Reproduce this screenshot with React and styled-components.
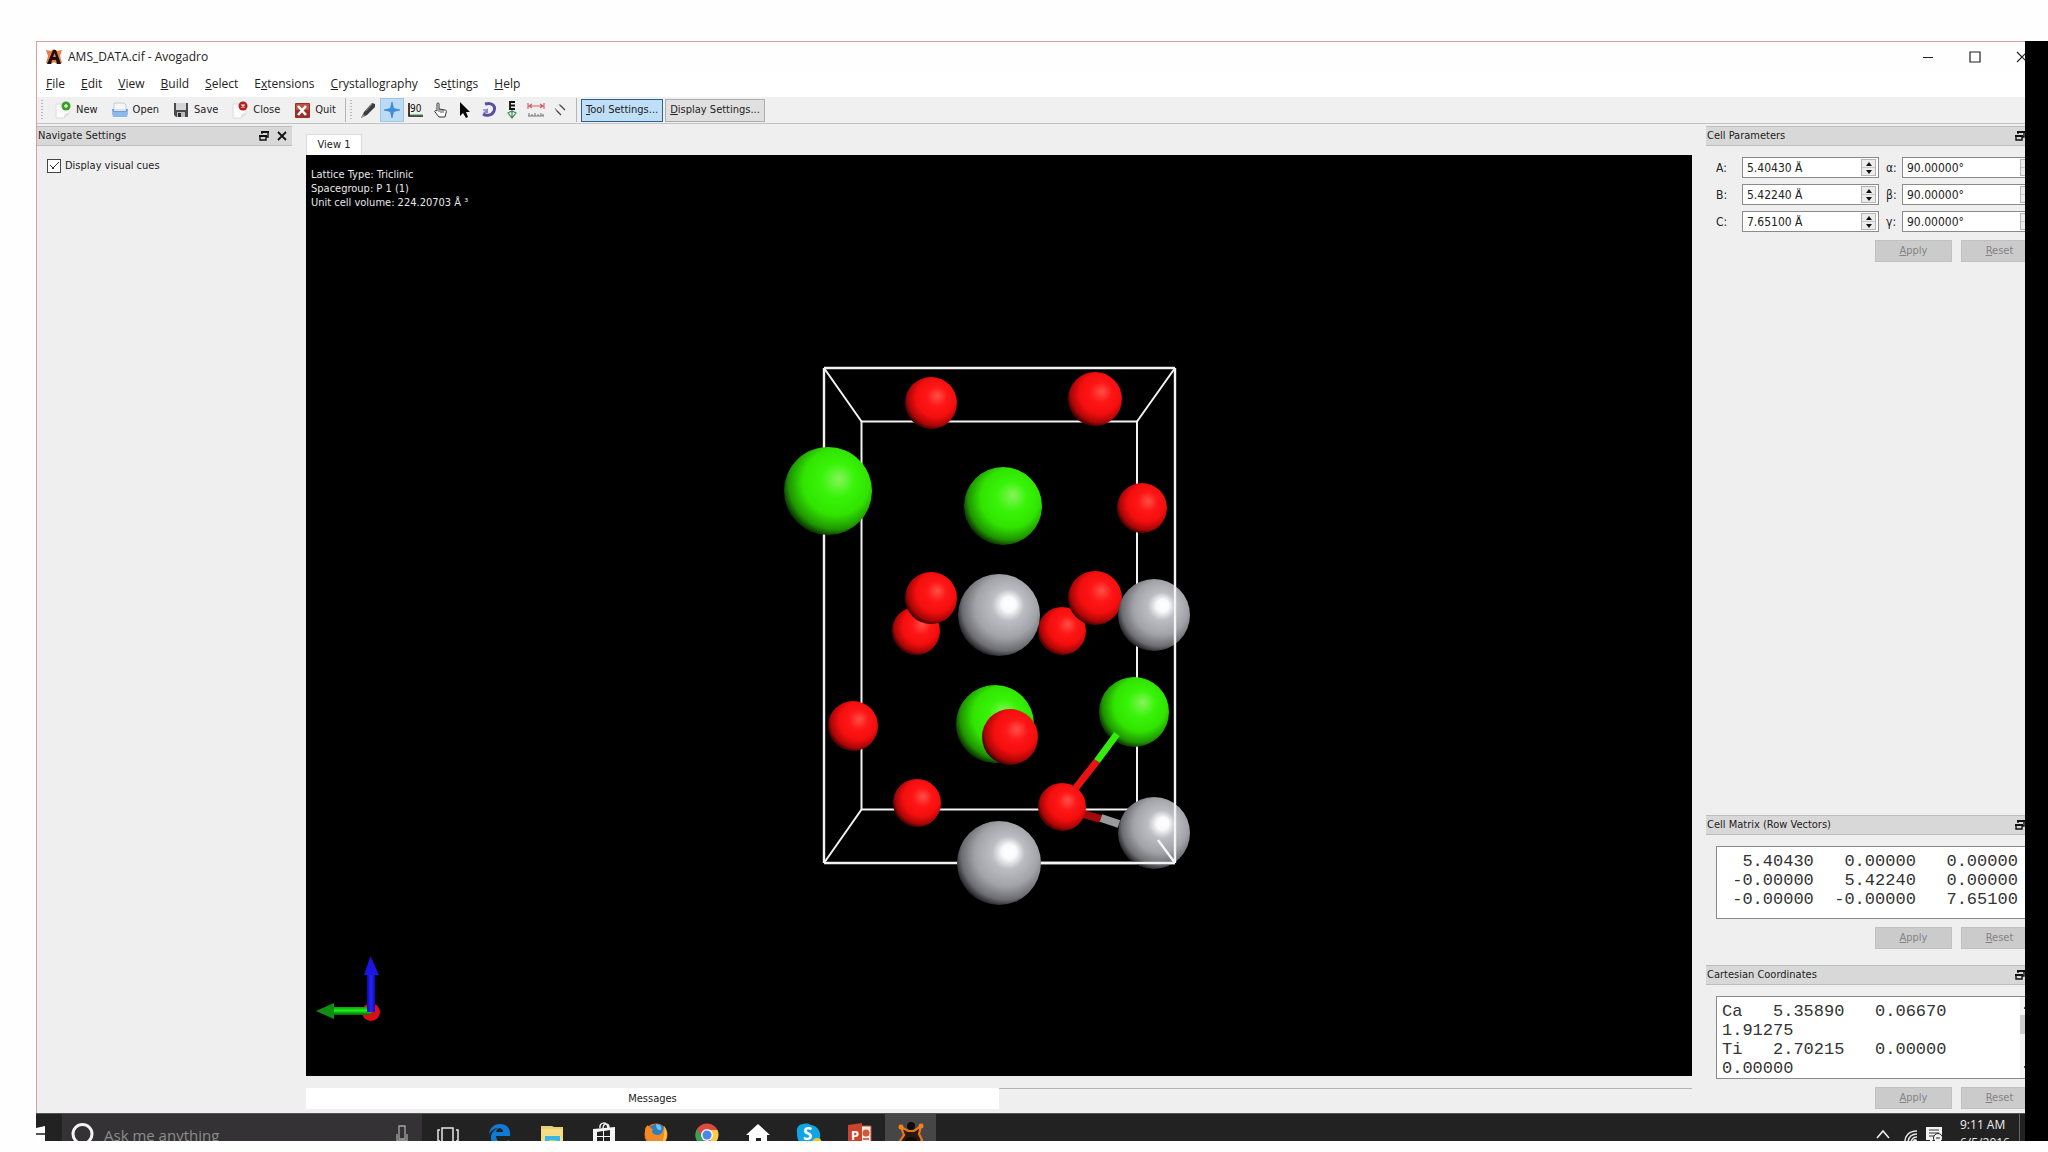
import React from "react";
import styled, { createGlobalStyle, css } from "styled-components";

const UI = `"DejaVu Sans Condensed", "DejaVu Sans", sans-serif`;
const SEGOE = `"Open Sans", "Noto Sans", sans-serif`;
const MONO = `"Liberation Mono", "Courier New", monospace`;

const Global = createGlobalStyle`
  *, *::before, *::after { box-sizing: border-box; }
  body { margin: 0; background: #fff; }
  button, input, textarea { font: inherit; color: inherit; margin: 0; }
`;

/* ---------- page ---------- */
const Stage = styled.div`
  display: flex;
  height: 100vh;
  padding: 41px 0 11px 36px;
  overflow: hidden;
  background: #fefefe;
`;
const Screen = styled.main`
  flex: 1;
  min-width: 0;
  display: flex;
  flex-direction: column;
  overflow: hidden;
`;
const BlackEdge = styled.div`
  flex: 0 0 23px;
  background: #000;
`;
const Window = styled.section`
  flex: 1;
  min-height: 0;
  display: flex;
  flex-direction: column;
  margin-right: -23px;
  background: #f0eff0;
  border: solid #d9a09b;
  border-width: 1px 0 0 1px;
  color: #222;
  font: 11px/14px ${UI};
`;

/* ---------- title and menu ---------- */
const TitleBar = styled.header`
  display: flex;
  align-items: center;
  height: 30px;
  padding-left: 8px;
  background: #fffefe;
  font: 12px/16px ${SEGOE};
`;
const Title = styled.h1`
  flex: 1;
  margin: 0 0 0 5px;
  font: inherit;
`;
const Caption = styled.button`
  width: 47px;
  height: 30px;
  padding: 0;
  border: 0;
  background: none;
  display: grid;
  place-items: center;
`;
const Captions = styled.div`
  display: flex;
  padding-right: 3px;
`;
const MenuBar = styled.nav`
  display: flex;
  align-items: center;
  gap: 16px;
  height: 25px;
  padding: 0 0 2px 9px;
  background: #fff;
  font: 12px/16px ${SEGOE};
`;
const MenuItem = styled.button`
  padding: 0;
  border: 0;
  background: none;
`;

/* ---------- toolbar ---------- */
const ToolBar = styled.div`
  display: flex;
  align-items: center;
  height: 27px;
  padding-left: 4px;
  background: #f1f0f1;
  border-bottom: 1px solid #c4c3c4;
`;
const Handle = styled.i`
  width: 2px;
  height: 20px;
  background: repeating-linear-gradient(#b9b9b9 0 1px, transparent 1px 3px);
`;
const FileActions = styled.div`
  display: flex;
  gap: 13px;
  padding: 0 9px 0 11px;
`;
const FileButton = styled.button`
  display: flex;
  align-items: center;
  gap: 4px;
  padding: 0;
  border: 0;
  background: none;
`;
const Rule = styled.i`
  width: 1px;
  height: 24px;
  margin-right: 4px;
  background: #b5b5b5;
`;
const Tools = styled.div`
  display: flex;
  padding: 0 4px;
`;
const ToolButton = styled.button`
  width: 24px;
  height: 24px;
  padding: 0;
  display: grid;
  place-items: center;
  border: 1px solid transparent;
  background: none;
  ${(p) => p.$on && css`background: #bcdcf4; border-color: #9fc8e8;`}
`;
const TextToggle = styled.button`
  height: 23px;
  padding: 0 4px;
  margin-right: 2px;
  border: 1px solid ${(p) => (p.$on ? "#2c628b" : "#adadad")};
  background: ${(p) => (p.$on ? "#bfdff6" : "#e1e0e1")};
`;

/* ---------- docks ---------- */
const Body = styled.div`
  flex: 1;
  min-height: 0;
  display: flex;
`;
const Dock = styled.aside`
  flex: 0 0 ${(p) => p.$width}px;
  min-width: 0;
  display: flex;
  flex-direction: column;
  padding-top: 2px;
`;
const DockTitle = styled.h2`
  display: flex;
  align-items: center;
  gap: 7px;
  height: 20px;
  margin: 0;
  padding: 0 5px 0 1px;
  font: inherit;
  background: #d9d8d9;
  border: solid #bfbebf;
  border-width: 1px 0;
  span { flex: 1; }
  svg { display: block; }
`;
const DockIcon = styled.button`
  padding: 0;
  border: 0;
  background: none;
`;
const CheckRow = styled.label`
  display: flex;
  align-items: center;
  gap: 4px;
  padding: 13px 10px;
`;
const Check = styled.input`
  appearance: none;
  width: 14px;
  height: 14px;
  margin: 0;
  border: 1px solid #444;
  background: #fff;
  &:checked {
    background-image: linear-gradient(45deg, transparent 46%, #333 46% 56%, transparent 56%),
      linear-gradient(-45deg, transparent 46%, #333 46% 56%, transparent 56%);
    background-size: 4px 4px, 7px 7px;
    background-position: 2px 5px, 4px 2px;
    background-repeat: no-repeat;
  }
`;
const Panel = styled.section`
  flex: ${(p) => (p.$grow ? "1" : "0 0 auto")};
`;
const PanelBody = styled.div`
  padding: 11px 10px ${(p) => p.$bottom}px;
`;
const ParamGrid = styled.div`
  display: grid;
  grid-template-columns: 26px 137px 23px minmax(0, 1fr);
  row-gap: 6px;
  align-items: center;
  font-size: 12px;
`;
const ParamLabel = styled.label`
  padding-left: ${(p) => (p.$second ? 7 : 0)}px;
`;
const Spin = styled.div`
  display: flex;
  height: 21px;
  border: 1px solid #8b8a8b;
  background: #fff;
  input {
    flex: 1;
    width: 0;
    min-width: 0;
    padding: 0 0 0 4px;
    border: 0;
    background: none;
    outline: 0;
  }
`;
const SpinArrows = styled.div`
  flex: 0 0 15px;
  display: flex;
  flex-direction: column;
  margin: 1px 2px 1px 0;
  background: #ececec;
  border: 1px solid #b5b5b5;
  button {
    flex: 1;
    display: grid;
    place-items: center;
    padding: 0;
    border: 0;
    background: none;
    min-height: 0;
  }
  button + button { border-top: 1px solid #c8c8c8; }
`;
const Actions = styled.div`
  display: flex;
  justify-content: flex-end;
  gap: 9px;
  margin-top: 8px;
`;
const ActionButton = styled.button`
  width: 77px;
  height: 22px;
  padding: 0;
  border: 1px solid #c2c1c2;
  background: #cccbcc;
  color: #848384;
`;
const Frame = styled.div`
  display: flex;
  height: ${(p) => p.$height}px;
  border: 1px solid #8b8a8b;
  background: #fff;
`;
const Code = styled.textarea`
  flex: 1;
  min-width: 0;
  padding: 5px 0 0 5px;
  border: 0;
  outline: 0;
  resize: none;
  overflow: hidden;
  white-space: pre;
  background: none;
  color: #333;
  font: 17px/19px ${MONO};
`;
const ScrollTrack = styled.div`
  flex: 0 0 17px;
  display: flex;
  flex-direction: column;
  justify-content: space-between;
  padding: 7px 4px;
  background: linear-gradient(#cdcdcd, #cdcdcd) 0 18px / 17px 19px no-repeat #f3f3f3;
`;

/* ---------- centre ---------- */
const Center = styled.div`
  flex: 1;
  min-width: 0;
  display: flex;
  flex-direction: column;
  margin: 0 14px;
  padding-top: 10px;
`;
const Tab = styled.button`
  align-self: flex-start;
  height: 21px;
  width: 56px;
  padding: 0;
  border: 1px solid #dcdbdc;
  border-bottom: 0;
  background: #fff;
`;
const View = styled.div`
  position: relative;
  flex: 1;
  min-height: 0;
  background: #000;
`;
const Scene = styled.svg`
  display: block;
  width: 100%;
  height: 100%;
`;
const Overlay = styled.p`
  position: absolute;
  left: 5px;
  top: 13px;
  margin: 0;
  color: #e8e8e8;
  white-space: pre;
`;
const MessageRow = styled.div`
  display: flex;
  padding: 12px 0 4px;
`;
const MessageTab = styled.button`
  flex: 1;
  height: 21px;
  padding: 0;
  border: 0;
  background: #fff;
`;
const MessageRest = styled.div`
  flex: 1;
  border-top: 1px solid #b5b4b5;
`;

/* ---------- taskbar ---------- */
const TaskBar = styled.footer`
  flex: 0 0 28px;
  display: flex;
  overflow: hidden;
  border-top: 1px solid #555;
  background: #232223;
  color: #eee;
  font: 12px/18px ${SEGOE};
`;
const StartButton = styled.button`
  width: 26px;
  height: 42px;
  padding: 0;
  border: 0;
  background: none;
  svg { display: block; }
`;
const Search = styled.label`
  display: flex;
  align-items: flex-start;
  width: 360px;
  height: 42px;
  padding-left: 9px;
  background: #343234;
  input {
    flex: 1;
    min-width: 0;
    height: 42px;
    padding: 0 0 0 10px;
    border: 0;
    outline: 0;
    background: none;
    font: 15px/20px ${SEGOE};
  }
  input::placeholder { color: #8d8b8d; opacity: 1; }
`;
const Apps = styled.div`
  flex: 1;
  display: flex;
`;
const AppButton = styled.button`
  display: flex;
  align-items: flex-start;
  justify-content: center;
  width: ${(p) => (p.$first ? 52 : 51)}px;
  height: 42px;
  padding: 0;
  border: 0;
  background: ${(p) => (p.$on ? "#474647" : "none")};
`;
const Tray = styled.div`
  display: flex;
  button { padding: 0; border: 0; background: none; height: 42px; }
  svg { display: block; }
`;
const Clock = styled.time`
  width: 60px;
  height: 42px;
  margin-left: 17px;
  padding-top: 2px;
  border-right: 1px solid #666;
  white-space: pre;
`;

/* Marks the letter after "&" as the access key. */
function Key({ text }) {
  const at = text.indexOf("&");
  return (
    <>
      {text.slice(0, at)}
      <u>{text[at + 1]}</u>
      {text.slice(at + 2)}
    </>
  );
}

const Svg = ({ w = 18, h = w, vb, children }) => (
  <svg width={w} height={h} viewBox={vb || `0 0 ${w} ${h}`} fill="none" aria-hidden="true">
    {children}
  </svg>
);

const Page = ({ badge, mark }) => (
  <Svg>
    <path d="M2 3h9l4 4v6l-5 4H2z" fill="#fbfbfb" stroke="#dcdcdc" />
    <path d="M15 12l-5 5c0-3 1-5 5-5z" fill="#ddd" />
    <circle cx="12" cy="5" r="4.500" fill={badge} />
    {mark}
  </Svg>
);

const fileActions = [
  ["New", <Page badge="#3f9c2b" mark={<path d="M12 3v4M10 5h4" stroke="#d8f5c8" strokeWidth="1.500" />} />],
  ["Open", <Svg>
    <path d="M3 9V2h10l2 2v5z" fill="#f4f7fb" stroke="#c5cbd4" />
    <path d="M1 8h2v2h12V8h2l-1 8H2z" fill="#6da0dc" />
    <path d="M1 11h16l-1 5H2z" fill="#8db8ea" />
  </Svg>],
  ["Save", <Svg>
    <path d="M2 2h14v14H4l-2-2z" fill="#4a4a4c" />
    <path d="M4 2h10v7H4z" fill="#d4d4d6" />
    <path d="M5 11h8v5H5z" fill="#b9b9bb" />
    <path d="M6 12h3v4H6z" fill="#2c2c2e" />
  </Svg>],
  ["Close", <Page badge="#b3201f" mark={<path d="M10.500 3.500l3 3M13.500 3.500l-3 3" stroke="#fff" strokeWidth="1.300" />} />],
  ["Quit", <Svg>
    <rect x="2" y="2" width="15" height="15" rx="1" fill="#9c2f25" />
    <rect x="3" y="3" width="13" height="6" fill="#bb5346" />
    <path d="M5 5l8 9M13 5l-8 9" stroke="#fff" strokeWidth="2.600" />
  </Svg>],
];

const tools = [
  ["Draw", <Svg>
    <path d="M2 17l3-6 8-9 3 1 0 3-8 8z" fill="#3c3c3c" />
    <path d="M2 17l2-4 2 2z" fill="#999" />
    <path d="M7 10l6-7" stroke="#888" />
  </Svg>],
  ["Navigate", <Svg><path d="M9 1l1.600 6.400L17 9l-6.400 1.600L9 17l-1.600-6.400L1 9l6.400-1.600z" fill="#3f8fdc" stroke="#2f78c0" strokeWidth=".6" /></Svg>],
  ["Bond centric", <Svg>
    <path d="M2 2v13h14" stroke="#111" strokeWidth="1.600" />
    <path d="M3 14h13" stroke="#2d9a3e" />
    <text x="3" y="11" fontSize="10" fontFamily="DejaVu Sans Condensed" fill="#111">90</text>
  </Svg>],
  ["Manipulate", <Svg>
    <path d="M6 10V3c0-1.500 2-1.500 2 0v5l6 1c1 0 2 1 1 3l-1 4H8l-4-5c-1-1 1-2 2-1z" fill="#fff" stroke="#333" />
    <path d="M10 9v3M12 9v3M8 8v3" stroke="#555" />
  </Svg>],
  ["Selection", <Svg><path d="M5 1v14l3-3 3 5 2-1-2-5h4z" fill="#050505" /></Svg>],
  ["Auto rotate", <Svg>
    <path d="M6 3c7-2 11 2 9 7-2 5-8 5-11 3" stroke="#564fa5" strokeWidth="3" />
    <path d="M9 7v5H4z" fill="#8d87c9" />
    <path d="M9 9H4" stroke="#8d87c9" strokeWidth="1.500" />
  </Svg>],
  ["Auto optimize", <Svg>
    <path d="M12 1H7v7h5M7 4.500h5" stroke="#111" strokeWidth="1.800" />
    <path d="M9 9v8M5 12l4-2 4 2-4 5z" stroke="#3f8f5c" strokeWidth="1.200" />
  </Svg>],
  ["Measure", <Svg>
    <path d="M1 2v6M17 2v6M2 5h14M5 3L2 5l3 2M13 3l3 2-3 2" stroke="#cf5a66" strokeWidth="1.100" />
    <path d="M1 15h16M2 15v-3M5 15v-2M8 15v-3M11 15v-2M14 15v-3M16 15v-2" stroke="#777" />
  </Svg>],
  ["Align", <Svg>
    <path d="M5 9l5 5M9 4l5 5" stroke="#444" strokeWidth="1.300" />
    <path d="M4 7l2 3M8 3l2 3" stroke="#888" />
  </Svg>],
];

const Float = () => (
  <DockIcon aria-label="Float">
    <Svg w={12}>
      <path d="M4 4V2h6v5H8" stroke="#111" strokeWidth="1.400" />
      <path d="M3 2h8" stroke="#111" strokeWidth="2" />
      <path d="M2 6h6v4H2z" stroke="#111" strokeWidth="1.400" />
      <path d="M1 6h8" stroke="#111" strokeWidth="2" />
    </Svg>
  </DockIcon>
);
const DockHead = ({ children }) => (
  <DockTitle>
    <span>{children}</span>
    <Float />
    <DockIcon aria-label="Close">
      <Svg w={10}><path d="M1 1l8 8M9 1L1 9" stroke="#111" strokeWidth="1.800" /></Svg>
    </DockIcon>
  </DockTitle>
);

const SpinBox = ({ id, value }) => (
  <Spin>
    <input id={id} defaultValue={value} />
    <SpinArrows>
      <button aria-label="Increase"><Svg w={6} h={4}><path d="M0 4l3-4 3 4z" fill="#111" /></Svg></button>
      <button aria-label="Decrease"><Svg w={6} h={4}><path d="M0 0h6L3 4z" fill="#111" /></Svg></button>
    </SpinArrows>
  </Spin>
);
const ApplyReset = () => (
  <Actions>
    <ActionButton disabled><Key text="&Apply" /></ActionButton>
    <ActionButton disabled><Key text="&Reset" /></ActionButton>
  </Actions>
);

const cell = [
  ["A:", "5.40430 Å", "α:", "90.00000°"],
  ["B:", "5.42240 Å", "β:", "90.00000°"],
  ["C:", "7.65100 Å", "γ:", "90.00000°"],
];
const matrix = `  5.40430   0.00000   0.00000
 -0.00000   5.42240   0.00000
 -0.00000  -0.00000   7.65100`;
const coordinates = `Ca   5.35890   0.06670
1.91275
Ti   2.70215   0.00000
0.00000`;

/* Atoms from back to front: element, x, y, radius. */
const atoms = [
  ["O", 931, 403, 26], ["O", 1095, 399, 27], ["Ca", 1003, 506, 39], ["O", 1142, 508, 25],
  ["O", 916, 631, 24], ["O", 931, 598, 26], ["O", 1062, 631, 24], ["O", 1095, 598, 27],
  ["Ti", 999, 615, 41], ["Ti", 1154, 615, 36], ["O", 853, 726, 25], ["Ca", 995, 724, 39],
  ["O", 1010, 737, 28], ["Ca", 1134, 712, 35], ["O", 917, 803, 24],
  ["Ti", 1154, 833, 36], ["Ca", 828, 491, 44],
];
const shades = {
  O: ["#ff5048", "#ff1616", "#f40e0e", "#a80606", "#2a0000"],
  Ca: ["#86f35a", "#38f408", "#30e400", "#1f9400", "#062400"],
  Ti: ["#ffffff", "#bcbdc2", "#a2a3a8", "#6c6c71", "#1c1c1f"],
};
const Atom = ({ a: [el, x, y, r] }) => <circle cx={x} cy={y} r={r} fill={`url(#${el})`} />;

function Molecule() {
  return (
    <Scene viewBox="306 155 1386 921" role="img" aria-label="Unit cell">
      <defs>
        {Object.entries(shades).map(([el, c]) => (
          <radialGradient key={el} id={el} cx=".57" cy=".42" r=".61" fx=".63" fy=".36">
            <stop offset="0" stopColor={c[0]} />
            {el === "Ti" && <stop offset=".14" stopColor="#fafafc" />}
            <stop offset=".32" stopColor={c[1]} />
            <stop offset=".62" stopColor={c[2]} />
            <stop offset=".86" stopColor={c[3]} />
            <stop offset="1" stopColor={c[4]} />
          </radialGradient>
        ))}
        <linearGradient id="zAxis"><stop stopColor="#0a0ab0" /><stop offset=".5" stopColor="#2b22ff" /><stop offset="1" stopColor="#0c0cb4" /></linearGradient>
        <linearGradient id="yAxis" x2="0" y2="1"><stop stopColor="#0d9a0d" /><stop offset=".45" stopColor="#1cf01c" /><stop offset="1" stopColor="#066006" /></linearGradient>
      </defs>
      <g stroke="#f2f2f2" strokeWidth="2" fill="none">
        <path d="M861.500 421.500H1137V809.500H861.500z" />
        <path d="M824 368l37.500 53.500M1175 368l-38 53.500M824 863l37.500-53.500M1175 863l-38-53.500" />
        <path d="M824 368H1175M824 863H1175M824 368V863" strokeWidth="2.400" />
      </g>
      {atoms.map((a, i) => <Atom key={i} a={a} />)}
      <path d="M1076 812l25 7" stroke="#a00a0a" strokeWidth="8" />
      <path d="M1101 818l18 6" stroke="#9a9a9c" strokeWidth="8" />
      <Atom a={["O", 1062, 807, 24]} />
      <path d="M1075 789l22-28" stroke="#e81414" strokeWidth="7" />
      <path d="M1097 761l20-27" stroke="#36ec0c" strokeWidth="7" />
      <Atom a={["Ti", 999, 863, 42]} />
      <g stroke="#f4f4f4" strokeWidth="2.400">
        <path d="M1175 368V863M1158 840l17 23M1041 863h134" />
      </g>
      <circle cx="371" cy="1012" r="9" fill="#d80f14" />
      <path d="M333 1007h36l4 4-4 4h-36z" fill="url(#yAxis)" />
      <path d="M316 1011l18-8v16z" fill="#0f8f12" />
      <path d="M367 972h8v40h-8z" fill="url(#zAxis)" />
      <path d="M370.500 956l8.500 19h-15z" fill="#1a16e0" />
    </Scene>
  );
}

const apps = [
  ["Task View", <Svg w={24} h={30}><path d="M6 14h11v15H6zM4 16H2v11h2M20 16h2v11h-2" stroke="#e6e6e6" strokeWidth="1.500" /></Svg>],
  ["Edge", <Svg w={24} h={32}><path d="M1 20C2 13 7 10 12 10c7 0 11 5 10 12H8c0 7 8 7 13 4v4c-8 4-19 3-18-8 1-4 4-7 8-8-5 0-8 3-10 6zm7-2h7c0-5-6-5-7 0z" fill="#0f7bd6" /></Svg>],
  ["File Explorer", <Svg w={24} h={32}>
    <path d="M1 12h11l2 1h9v19H1z" fill="#e8cf74" /><path d="M1 15h22v17H1z" fill="#f5dd86" />
    <path d="M5 22h15v10H5z" fill="#3cb6e6" /><path d="M9 26h7v6H9z" fill="#a5e04e" />
  </Svg>],
  ["Store", <Svg w={24} h={32}>
    <path d="M8 14c-1-6 7-7 8 0M11 14c1-6 6-5 6 0" stroke="#eee" strokeWidth="1.500" />
    <path d="M1 15l22-2v19H1z" fill="#f6f6f6" />
    <path d="M5 18l6-1v5H5zM12 17l6-1v6h-6zM5 23h6v6l-6-1zM12 23h6v7l-6-1z" fill="#222" />
  </Svg>],
  ["Firefox", <Svg w={24} h={32}>
    <circle cx="12" cy="21" r="11.500" fill="#e8701c" /><circle cx="13" cy="18" r="8" fill="#2b7fc4" />
    <path d="M12 10c4 0 6 3 5 6-3 1-5-2-5-6z" fill="#6cc3ee" />
    <path d="M1 17c0-4 2-5 3-6 1 3 3 3 5 4-2 3 0 6 4 6 4 0 6-2 7-9 5 6 4 16-4 19-8 3-15-4-15-14z" fill="#f08a24" />
    <path d="M20 12c4 5 4 13-2 18 2-6 3-12 2-18z" fill="#fbc63c" />
  </Svg>],
  ["Chrome", <Svg w={24} h={32}>
    <circle cx="12" cy="21" r="11.500" fill="#dd4b3e" />
    <path d="M2 15l6 9 4 8.500C2 32-2 23 2 15z" fill="#35a256" />
    <path d="M12 16h10.500c3 8-2 16-10.500 16.500l5-9z" fill="#f8cf44" />
    <circle cx="12" cy="21" r="6" fill="#f4f4f4" /><circle cx="12" cy="21" r="4.500" fill="#4b86e8" />
  </Svg>],
  ["Home", <Svg w={26} h={32}><path d="M13 10l12 11h-3v9h-6v-6h-5v6H4v-9H1z" fill="#fff" /></Svg>],
  ["Skype", <Svg w={26} h={32}>
    <path d="M7 10c4-1 6 0 8 1 7 1 10 7 9 12 1 4 0 8-2 9H8C2 29 1 24 1 19c-1-5 2-9 6-9z" fill="#12a5e4" />
    <text x="7" y="26" fontSize="17" fontWeight="700" fontFamily="Open Sans" fill="#fff">S</text>
    <circle cx="21" cy="29" r="5" fill="#f4c81e" />
  </Svg>],
  ["PowerPoint", <Svg w={24} h={32}>
    <path d="M12 12h11v20H12z" fill="#f3e9e5" stroke="#c9492d" />
    <path d="M15 25h6M15 28h6" stroke="#c9492d" strokeWidth="1.500" /><circle cx="18" cy="19" r="3.500" fill="#d2583c" />
    <path d="M0 11l14-2v23H0z" fill="#c9442a" />
    <text x="3" y="26" fontSize="13" fontWeight="700" fontFamily="Open Sans" fill="#fff">P</text>
  </Svg>],
  ["Avogadro", <Svg w={26} h={32}>
    <path d="M3 13l7 4 6 0 7-5-2 8 3 6-4 6H6l-4-5 4-6z" fill="#2a1710" stroke="#e8741c" strokeWidth="2.200" />
    <circle cx="3" cy="13" r="2.500" fill="#f08020" /><circle cx="23" cy="12" r="2.500" fill="#f08020" />
    <circle cx="13" cy="12" r="4" fill="#0c0c0c" /><path d="M5 32c1-12 15-12 16 0z" fill="#0c0c0c" />
  </Svg>],
];

export default function App() {
  return (
    <Stage>
      <Global />
      <Screen>
        <Window>
          <TitleBar>
            <Svg>
              <path d="M1 2l5 1 3-2 3 2 5-1-2 6 2 7-5 1-3-2-3 2-5-1 2-7z" fill="#ef7a48" />
              <path d="M2 16L8 2h3l5 14h-4l-1-4H7l-1 4zM8 9h3L9.500 5z" fill="#17110f" />
            </Svg>
            <Title>AMS_DATA.cif - Avogadro</Title>
            <Captions>
              <Caption aria-label="Minimize"><Svg w={12}><path d="M1 6.500h10" stroke="#222" /></Svg></Caption>
              <Caption aria-label="Maximize"><Svg w={12}><path d="M1 1h10v10H1z" stroke="#222" strokeWidth="1.200" /></Svg></Caption>
              <Caption aria-label="Close"><Svg w={12}><path d="M1 1l10 10M11 1L1 11" stroke="#222" strokeWidth="1.200" /></Svg></Caption>
            </Captions>
          </TitleBar>
          <MenuBar>
            {["&File", "&Edit", "&View", "&Build", "&Select", "E&xtensions", "&Crystallography", "Se&ttings", "&Help"].map((m) => (
              <MenuItem key={m}><Key text={m} /></MenuItem>
            ))}
          </MenuBar>
          <ToolBar>
            <Handle />
            <FileActions>
              {fileActions.map(([name, icon]) => <FileButton key={name}>{icon}{name}</FileButton>)}
            </FileActions>
            <Rule />
            <Handle />
            <Tools>
              {tools.map(([name, icon]) => (
                <ToolButton key={name} aria-label={name} $on={name === "Navigate"}>{icon}</ToolButton>
              ))}
            </Tools>
            <Rule />
            <TextToggle $on><Key text="&Tool Settings..." /></TextToggle>
            <TextToggle><Key text="&Display Settings..." /></TextToggle>
          </ToolBar>
          <Body>
            <Dock $width={255}>
              <DockHead>Navigate Settings</DockHead>
              <CheckRow><Check type="checkbox" defaultChecked />Display visual cues</CheckRow>
            </Dock>
            <Center>
              <Tab>View 1</Tab>
              <View>
                <Molecule />
                <Overlay>{"Lattice Type: Triclinic\nSpacegroup: P 1 (1)\nUnit cell volume: 224.20703 Å ³"}</Overlay>
              </View>
              <MessageRow>
                <MessageTab>Messages</MessageTab>
                <MessageRest />
              </MessageRow>
            </Center>
            <Dock $width={342}>
              <Panel $grow>
                <DockHead>Cell Parameters</DockHead>
                <PanelBody $bottom={16}>
                  <ParamGrid>
                    {cell.map(([l1, v1, l2, v2]) => (
                      <React.Fragment key={l1}>
                        <ParamLabel htmlFor={l1}>{l1}</ParamLabel>
                        <SpinBox id={l1} value={v1} />
                        <ParamLabel htmlFor={l2} $second>{l2}</ParamLabel>
                        <SpinBox id={l2} value={v2} />
                      </React.Fragment>
                    ))}
                  </ParamGrid>
                  <ApplyReset />
                </PanelBody>
              </Panel>
              <Panel>
                <DockHead>Cell Matrix (Row Vectors)</DockHead>
                <PanelBody $bottom={16}>
                  <Frame $height={73}>
                    <Code aria-label="Cell matrix" wrap="off" readOnly value={matrix} />
                  </Frame>
                  <ApplyReset />
                </PanelBody>
              </Panel>
              <Panel>
                <DockHead>Cartesian Coordinates</DockHead>
                <PanelBody $bottom={4}>
                  <Frame $height={83}>
                    <Code aria-label="Cartesian coordinates" wrap="off" readOnly value={coordinates} />
                    <ScrollTrack>
                      <Svg w={8} h={5}><path d="M0 5l4-4 4 4" stroke="#444" strokeWidth="2" /></Svg>
                      <Svg w={8} h={5}><path d="M0 0l4 4 4-4" stroke="#444" strokeWidth="2" /></Svg>
                    </ScrollTrack>
                  </Frame>
                  <ApplyReset />
                </PanelBody>
              </Panel>
            </Dock>
          </Body>
        </Window>
        <TaskBar>
          <StartButton aria-label="Start">
            <Svg w={26} h={42}><path d="M0 14l9-2v7H0zM0 21h9v8H0z" fill="#fff" /><path d="M0 20h9" stroke="#888" /></Svg>
          </StartButton>
          <Search>
            <Svg w={23} h={42}><circle cx="11.500" cy="20" r="9.500" stroke="#f4f4f4" strokeWidth="3" /></Svg>
            <input placeholder="Ask me anything" aria-label="Search" />
            <Svg w={26} h={42}><path d="M3 12h6v13H3zM1 20v7h10v-7" stroke="#a5a4a5" strokeWidth="1.300" /></Svg>
          </Search>
          <Apps>
            {apps.map(([name, icon], i) => (
              <AppButton key={name} aria-label={name} $on={name === "Avogadro"} $first={i < 4}>{icon}</AppButton>
            ))}
          </Apps>
          <Tray>
            <button aria-label="Show hidden icons"><Svg w={28} h={42}><path d="M8 24l6-7 6 7" stroke="#eee" strokeWidth="1.600" /></Svg></button>
            <button aria-label="Network"><Svg w={28} h={42}>
              <path d="M8 30C7 22 12 17 20 17M11 30c0-7 3-10 9-10M14 30c0-4 2-7 6-7" stroke="#e6e6e6" strokeWidth="1.500" />
              <circle cx="18" cy="27" r="2" fill="#eee" />
            </Svg></button>
            <button aria-label="Notifications"><Svg w={18} h={42}>
              <path d="M1 13h16v13H8l-3 3v-3H1z" fill="#f4f4f4" /><path d="M4 16h10M4 19h10M4 22h5" stroke="#333" strokeWidth="1.200" />
              <circle cx="13" cy="24" r="4.500" fill="#f4f4f4" stroke="#222" /><path d="M11 24h4" stroke="#222" />
            </Svg></button>
            <Clock>{"9:11 AM\n6/5/2016"}</Clock>
            <Svg w={5} h={42} />
          </Tray>
        </TaskBar>
      </Screen>
      <BlackEdge />
    </Stage>
  );
}
